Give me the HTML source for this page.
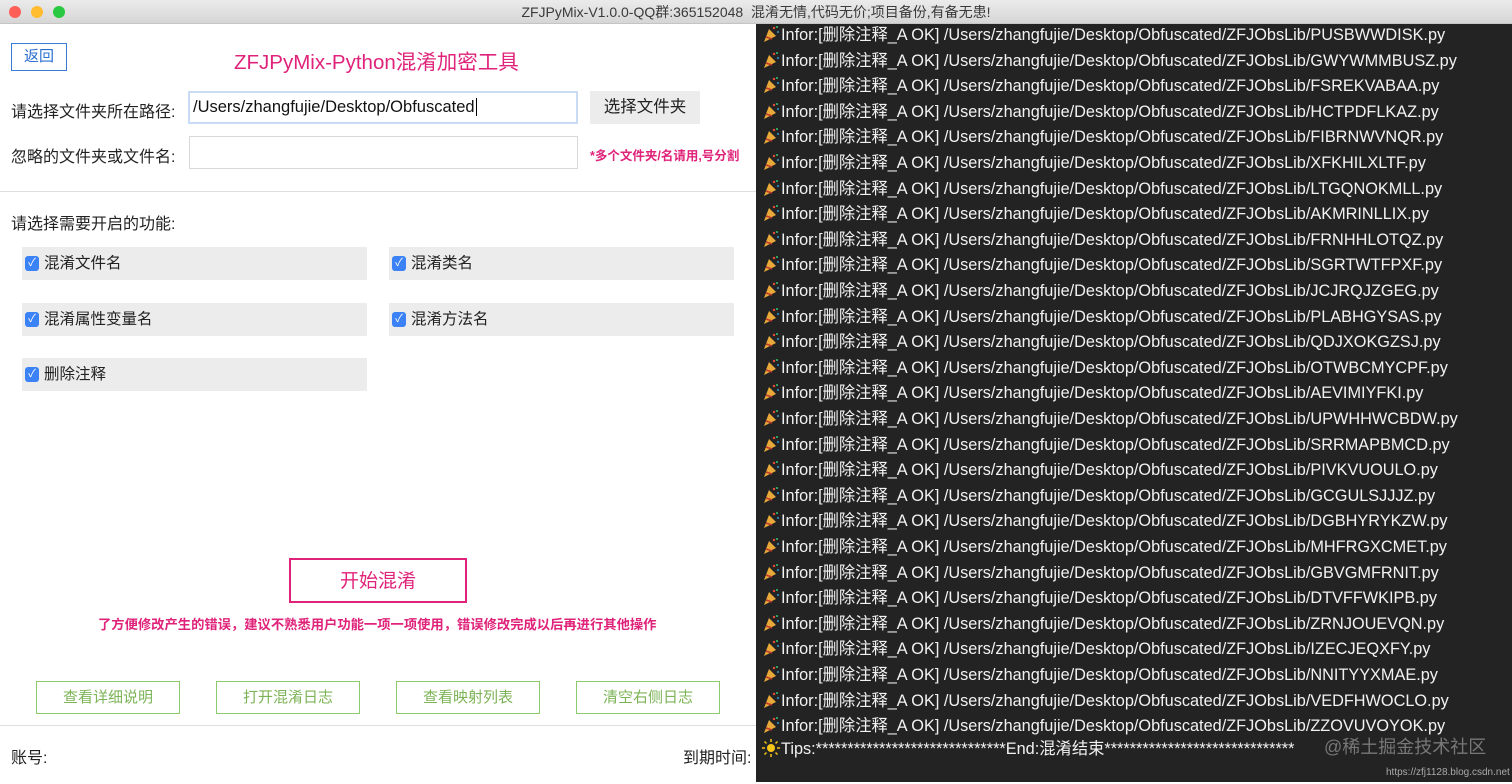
<!DOCTYPE html>
<html><head><meta charset="utf-8"><style>
*{margin:0;padding:0;box-sizing:border-box}
body{width:1512px;height:782px;overflow:hidden;background:#fff;font-family:"Liberation Sans","Noto Sans CJK SC",sans-serif;position:relative}
.tb{position:absolute;left:0;top:0;width:1512px;height:24px;background:linear-gradient(#ebebeb,#d6d6d6);border-bottom:1px solid #c4c4c4;text-align:center;font-size:14px;line-height:24px;color:#3a3a3a}
.dot{position:absolute;top:6px;width:12px;height:12px;border-radius:50%}
.a{position:absolute;white-space:nowrap}
.lbl{font-size:16px;color:#222}
.inp{position:absolute;border:1px solid #d8d8d8;background:#fff}
.cb{position:absolute;height:33px;background:#ececec;font-size:15.5px;color:#222;line-height:33px;padding-left:22px}
.cb i{position:absolute;left:3px;top:9px;width:14px;height:15px;border-radius:3px;background:#3b82f6;color:#fff;font-style:normal;font-size:11px;line-height:15px;text-align:center}
.gb{position:absolute;top:681px;width:144px;height:33px;border:1px solid #8cc96a;color:#7cb356;font-size:15px;text-align:center;line-height:31px}
.log{position:absolute;left:756px;top:24px;width:756px;height:758px;background:#232323;color:#f2f2f2;font-size:16.3px}
.log div{position:absolute;left:6px;white-space:nowrap;height:22px;line-height:22px}
.log svg{vertical-align:-3px;margin-right:1px}
</style></head><body>
<div class="tb">ZFJPyMix-V1.0.0-QQ群:365152048&nbsp; 混淆无情,代码无价;项目备份,有备无患!</div>
<div class="dot" style="left:9px;background:#fe5f57"></div>
<div class="dot" style="left:31px;background:#febc2e"></div>
<div class="dot" style="left:53px;background:#28c840"></div>

<div class="a" style="left:11px;top:43px;width:56px;height:28px;border:1px solid #3a7bd5;color:#2a6fd0;font-size:15px;text-align:center;line-height:26px">返回</div>
<div class="a" style="left:234px;top:45px;font-size:20.5px;color:#e0237a">ZFJPyMix-Python混淆加密工具</div>
<div class="a lbl" style="left:11px;top:98px">请选择文件夹所在路径:</div>
<div class="inp" style="left:188px;top:91px;width:390px;height:33px;border:2px solid #c9dcf3;font-size:16.5px;line-height:29px;padding-left:3px;color:#111">/Users/zhangfujie/Desktop/Obfuscated<span style="border-left:1px solid #000;margin-left:1px"></span></div>
<div class="a" style="left:590px;top:91px;width:110px;height:33px;background:#ececec;font-size:16.5px;text-align:center;line-height:33px;color:#222">选择文件夹</div>
<div class="a lbl" style="left:11px;top:143px">忽略的文件夹或文件名:</div>
<div class="inp" style="left:189px;top:136px;width:389px;height:33px"></div>
<div class="a" style="left:590px;top:145px;font-size:12.5px;color:#e0237a;font-weight:bold">*多个文件夹/名请用,号分割</div>
<div class="a" style="left:0;top:191px;width:756px;height:1px;background:#ddd"></div>

<div class="a lbl" style="left:11px;top:210px">请选择需要开启的功能:</div>
<div class="cb" style="left:22px;top:247px;width:345px"><i>✓</i>混淆文件名</div>
<div class="cb" style="left:389px;top:247px;width:345px"><i>✓</i>混淆类名</div>
<div class="cb" style="left:22px;top:303px;width:345px"><i>✓</i>混淆属性变量名</div>
<div class="cb" style="left:389px;top:303px;width:345px"><i>✓</i>混淆方法名</div>
<div class="cb" style="left:22px;top:358px;width:345px"><i>✓</i>删除注释</div>

<div class="a" style="left:289px;top:558px;width:178px;height:45px;border:2px solid #e0237a;color:#e0237a;font-size:19px;text-align:center;line-height:43px">开始混淆</div>
<div class="a" style="left:98px;top:614px;font-size:13.3px;color:#e0237a;font-weight:bold">了方便修改产生的错误，建议不熟悉用户功能一项一项使用，错误修改完成以后再进行其他操作</div>

<div class="gb" style="left:36px">查看详细说明</div>
<div class="gb" style="left:216px">打开混淆日志</div>
<div class="gb" style="left:396px">查看映射列表</div>
<div class="gb" style="left:576px">清空右侧日志</div>
<div class="a" style="left:0;top:725px;width:756px;height:1px;background:#ddd"></div>
<div class="a lbl" style="left:11px;top:744px">账号:</div>
<div class="a lbl" style="left:683px;top:744px">到期时间:</div>

<div class="log" id="log"></div>
<script>
var n="PUSBWWDISK GWYWMMBUSZ FSREKVABAA HCTPDFLKAZ FIBRNWVNQR XFKHILXLTF LTGQNOKMLL AKMRINLLIX FRNHHLOTQZ SGRTWTFPXF JCJRQJZGEG PLABHGYSAS QDJXOKGZSJ OTWBCMYCPF AEVIMIYFKI UPWHHWCBDW SRRMAPBMCD PIVKVUOULO GCGULSJJJZ DGBHYRYKZW MHFRGXCMET GBVGMFRNIT DTVFFWKIPB ZRNJOUEVQN IZECJEQXFY NNITYYXMAE VEDFHWOCLO ZZOVUVOYOK".split(" ");
var ic='<svg width="18" height="18" viewBox="0 0 18 18"><path d="M2 17 L7 4 L14 11 Z" fill="#e8a93a"/><path d="M4 12 L10 14" stroke="#c0392b" stroke-width="1.5"/><circle cx="12" cy="3" r="1.2" fill="#e74c3c"/><circle cx="16" cy="7" r="1" fill="#3498db"/><circle cx="15" cy="2" r="1" fill="#2ecc71"/></svg>';
var h="";
for(var i=0;i<n.length;i++){h+='<div style="top:'+(0+i*25.6)+'px">'+ic+'Infor:[删除注释_A OK] /Users/zhangfujie/Desktop/Obfuscated/ZFJObsLib/'+n[i]+'.py</div>';}
h+='<div style="top:714px"><svg width="18" height="18" viewBox="0 0 18 18" style="vertical-align:-3px"><circle cx="9" cy="9" r="4" fill="#f5c518"/><g stroke="#f5c518" stroke-width="1.5"><path d="M9 0v3M9 15v3M0 9h3M15 9h3M2.5 2.5l2 2M13.5 13.5l2 2M2.5 15.5l2-2M13.5 4.5l2-2"/></g></svg>Tips:******************************End:混淆结束******************************</div>';
h+='<div style="top:712px;left:568px;color:#777;font-size:18px">@稀土掘金技术社区</div>';
h+='<div style="top:738px;left:630px;color:#aaa;font-size:10px">https://zfj1128.blog.csdn.net</div>';
document.getElementById("log").innerHTML=h;
</script>
</body></html>
